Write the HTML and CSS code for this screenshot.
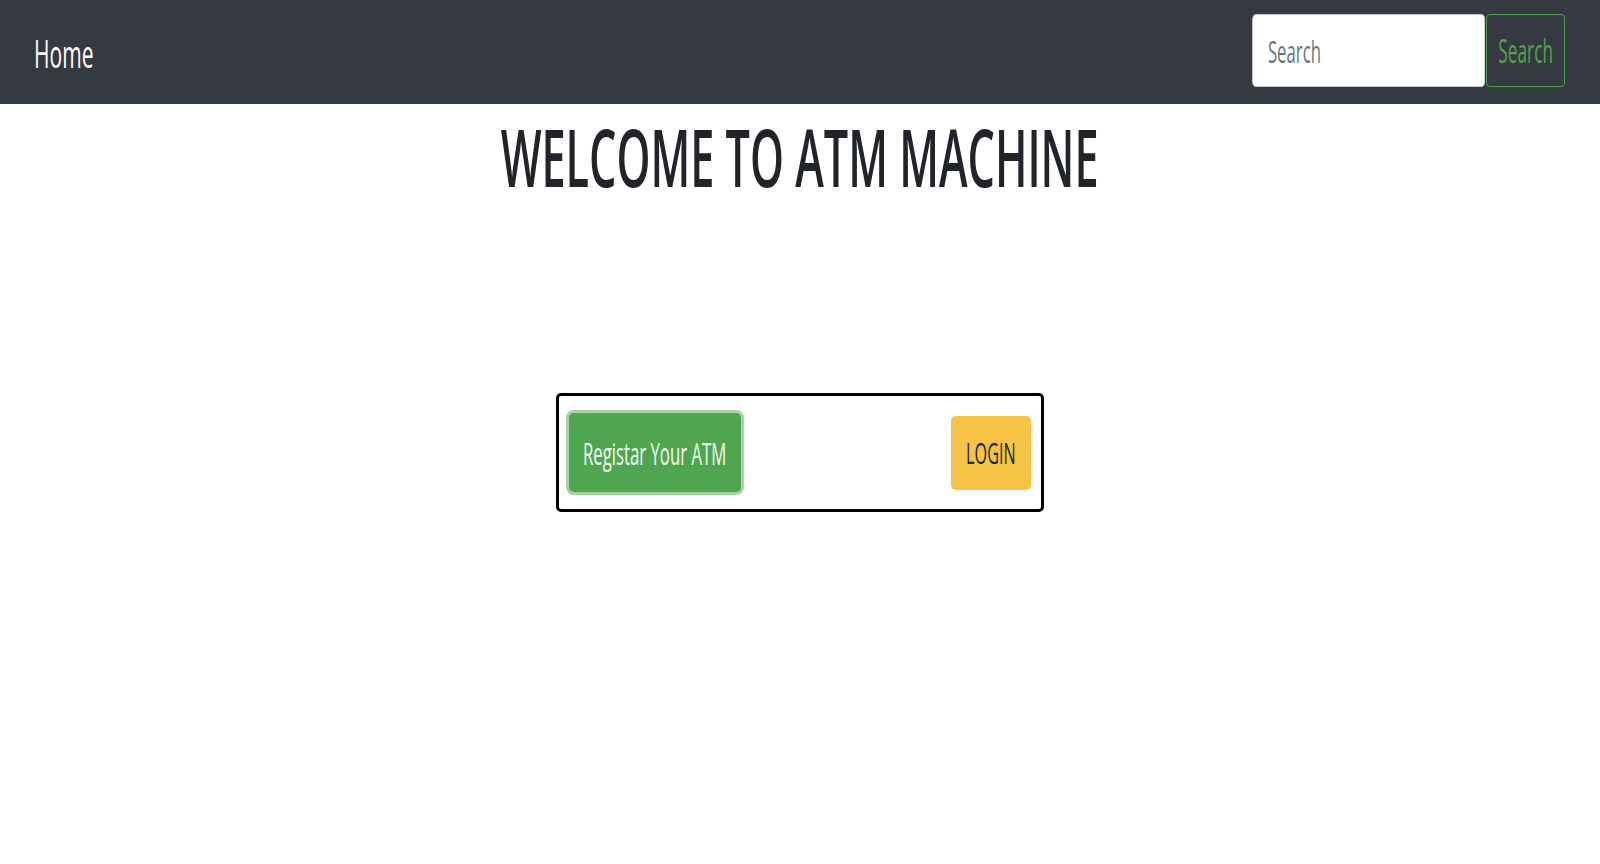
FILE: index.html
```html
<!DOCTYPE html>
<html lang="en">
<head>
<meta charset="utf-8">
<title>ATM Machine</title>
<link rel="stylesheet" href="styles.css">
</head>
<body>
<nav class="navbar">
  <a class="brand" href="#"><span class="sq sq-left">Home</span></a>
  <form class="search">
    <div class="search-field">
      <input class="search-input" type="search" placeholder="Search">
    </div>
    <button class="search-btn" type="button"><span class="sq">Search</span></button>
  </form>
</nav>
<main class="main">
  <h1 class="title"><span class="sq">WELCOME TO ATM MACHINE</span></h1>
  <div class="panel">
    <button class="btn btn-register" type="button"><span class="sq">Registar Your ATM</span></button>
    <button class="btn btn-login" type="button"><span class="sq">LOGIN</span></button>
  </div>
</main>
</body>
</html>
```

FILE: styles.css
```css
* { box-sizing: border-box; }
html, body { margin: 0; padding: 0; background: #fff; }
body { font-family: "Open Sans", "Noto Sans", sans-serif; color: #212529; overflow-x: hidden; }

.sq { display: inline-block; transform: scaleX(0.54); transform-origin: center; white-space: nowrap; }
.sq-left { transform-origin: left center; }

.navbar {
  height: 104px;
  background: #343a40;
  display: flex;
  align-items: center;
  justify-content: space-between;
  padding: 0 35px 0 34px;
}
.brand { color: #fff; text-decoration: none; font-size: 39px; line-height: 1; }

.search { display: flex; align-items: center; gap: 1px; margin-top: -3px; }
.search-field { width: 233px; height: 73px; display: flex; justify-content: flex-end; }
.search-input {
  flex: none;
  width: 431px; height: 73px;
  transform: scaleX(0.54); transform-origin: right center;
  border: 1px solid #ced4da; border-radius: 6px;
  background: #fff;
  font-family: "Open Sans", sans-serif; font-size: 31px;
  padding: 0 0 0 28px; color: #495057;
  outline: none;
}
.search-input::placeholder { color: #6c757d; }
.search-btn {
  width: 79px; height: 73px;
  background: transparent;
  border: 1px solid #4f9a4f; border-radius: 4px;
  color: #52a352;
  font-family: "Open Sans", sans-serif; font-size: 32px;
  padding: 0;
  display: flex; align-items: center; justify-content: center;
  overflow: visible;
}

.main { display: flex; flex-direction: column; align-items: center; }
.title {
  margin: 4px 0 0;
  font-size: 80px; line-height: 96px; font-weight: 600;
  color: #212529;
}

.panel {
  margin-top: 189px;
  width: 488px; height: 119px;
  border: 3px solid #000; border-radius: 5px;
  display: flex; align-items: center; justify-content: space-between;
  padding: 0 10px;
}
.btn {
  border: 0; border-radius: 5px; padding: 0;
  font-family: "Open Sans", sans-serif; font-size: 31px;
  display: flex; align-items: center; justify-content: center;
}
.btn-register {
  width: 172px; height: 79px;
  background: #50a550; color: #f4fff4;
  box-shadow: 0 0 0 3px #a3d4a3;
}
.btn-login {
  width: 80px; height: 74px;
  background: #f6c344; color: #212529;
  font-size: 30px;
}
```
